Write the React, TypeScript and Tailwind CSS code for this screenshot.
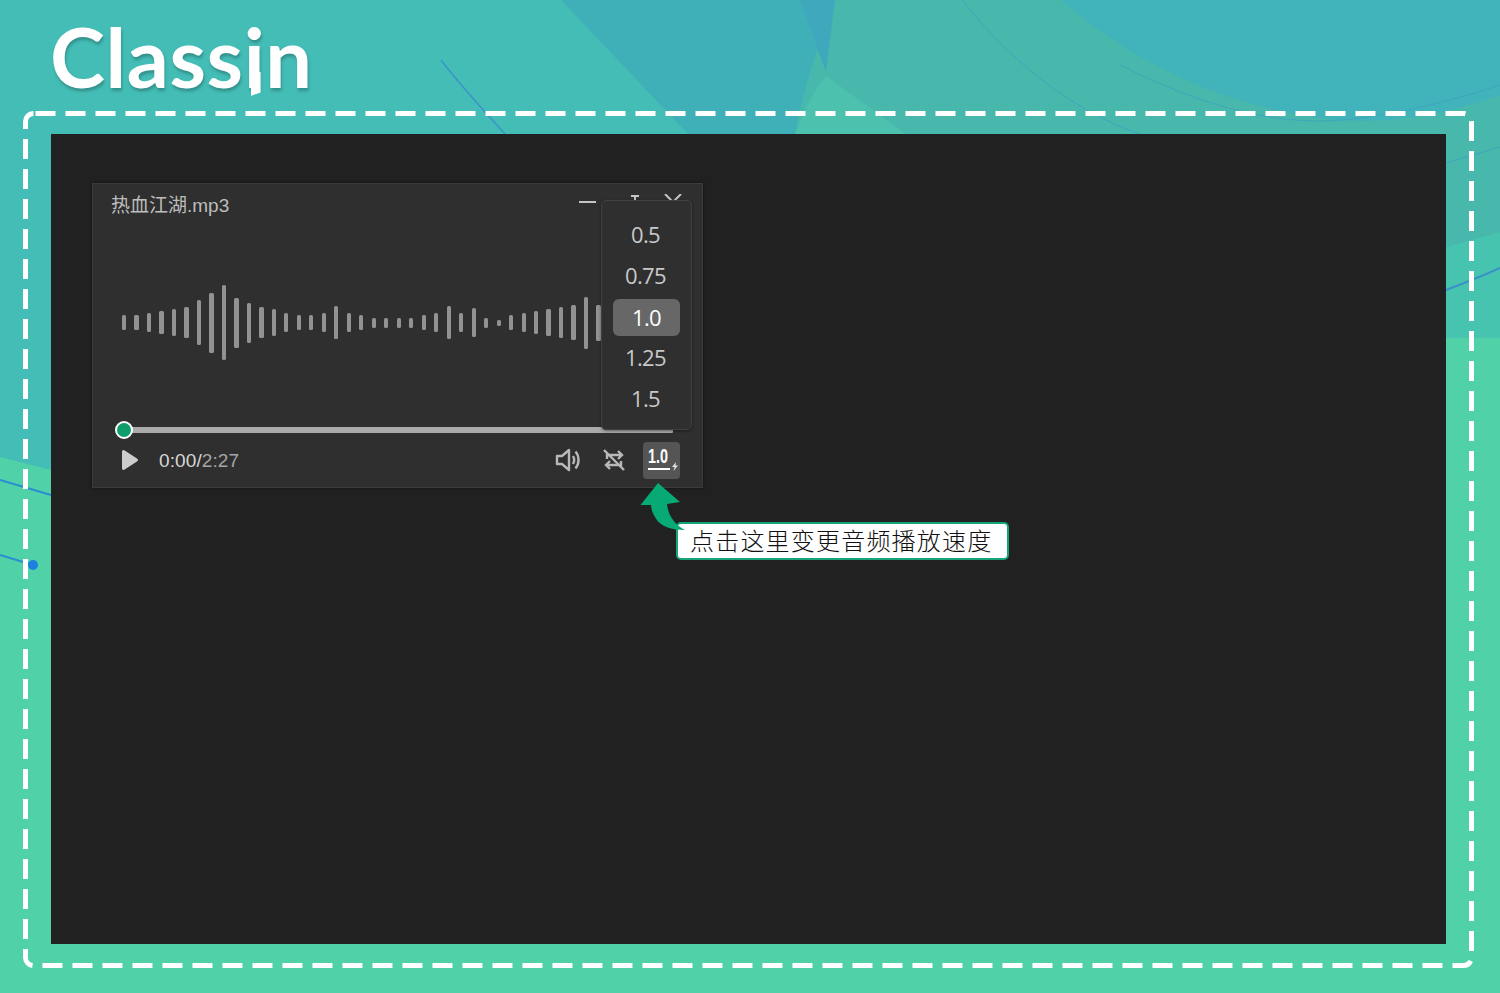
const BARS = [15, 15, 19, 23, 27, 31, 45, 60, 75, 50, 40, 31, 27, 19, 15, 15, 19, 33, 19, 15, 10, 10, 10, 10, 15, 19, 33, 19, 29, 10, 6, 15, 19, 23, 27, 31, 35, 52, 36];
const SPEEDS = ["0.5", "0.75", "1.0", "1.25", "1.5"];

function Backdrop() {
  return (
    <svg className="absolute inset-0" width="1500" height="993" viewBox="0 0 1500 993" fill="none">
      <rect width="1500" height="993" fill="#50d1a8" />
      <path d="M0 0H1500V338H1446V600H51V470L0 457Z" fill="#44bdb6" />
      <path d="M1446 247L1500 232V338H1446Z" fill="#47c4b0" />
      <path d="M835 0H1500V232L1446 247V134H795C803 90 818 45 835 0Z" fill="#48b8ac" />
      <path d="M561 0H835C818 45 803 90 795 134H688Z" fill="#3fb0b8" />
      <path d="M800 0H835L826 72Z" fill="#3fa8bc" />
      <path d="M826 76L906 134H795C803 110 815 90 826 76Z" fill="#4bc1ae" />
      <path d="M1061 0H1500V95C1430 120 1370 125 1320 118C1220 105 1130 60 1061 0Z" fill="#41b3ba" />
      <path d="M441 60C460 85 485 112 505 134" stroke="#3a95c8" strokeWidth="1.5" />
      <path d="M962 0C1010 60 1070 110 1140 134" stroke="#3fa6bd" strokeWidth="1" />
      <path d="M1120 65C1200 105 1280 130 1360 118C1420 110 1470 95 1500 85" stroke="#3fa6bd" strokeWidth="1" />
      <path d="M1446 163L1500 147" stroke="#3fa6bd" strokeWidth="1" />
      <path d="M1446 290C1465 283 1485 275 1500 268" stroke="#3a8fc8" strokeWidth="2" />
      <path d="M0 480L51 495" stroke="#2a8fd0" strokeWidth="2" />
      <path d="M0 555L33 565" stroke="#2a8fd0" strokeWidth="2" />
      <circle cx="33" cy="565" r="5" fill="#1f7fe0" />
      <rect x="25.5" y="113.5" width="1446" height="852" rx="8" stroke="#ffffff" strokeWidth="5" strokeDasharray="20 10" strokeDashoffset="-2" />
    </svg>
  );
}

function WindowButtons() {
  return (
    <svg width="103" height="16" viewBox="0 0 103 16" fill="none" stroke="#c4c4c4" strokeWidth="2">
      <path d="M0 8H17" />
      <path d="M52 2H60M56 2V8" />
      <path d="M86 0L94 8L102 0" />
    </svg>
  );
}

function VolumeIcon() {
  return (
    <svg width="25" height="24" viewBox="0 0 25 24" fill="none" stroke="#b8b8b8" strokeWidth="2.4" strokeLinejoin="round">
      <path d="M2 8H7L14 2V22L7 16H2Z" />
      <path d="M18 8C19.5 10.5 19.5 13.5 18 16" />
      <path d="M20.5 3.5C24.5 8 24.5 16 20.5 20.5" />
    </svg>
  );
}

function RepeatOffIcon() {
  return (
    <svg width="24" height="24" viewBox="0 0 24 24" fill="none" stroke="#b8b8b8" strokeWidth="2.4">
      <path d="M5 11V7H20M16 3L20 7L16 11" />
      <path d="M19 13V17H4M8 21L4 17L8 13" />
      <path d="M2 2L22 22" />
    </svg>
  );
}

function CalloutArrow() {
  return (
    <svg className="absolute left-[589px] top-[349px]" width="50" height="50" viewBox="640 483 50 50">
      <path d="M658 483L680 502L667 504C668 515 674 524 685 530C672 530 660 527 655 517C652 512 651 508 651 505L640.5 505Z" fill="#07a974" />
    </svg>
  );
}

export default function App() {
  return (
    <div className="relative h-[993px] w-[1500px] overflow-hidden" style={{ fontFamily: '"Open Sans", "Noto Sans CJK SC", sans-serif' }}>
      <Backdrop />

      <div className="relative flex h-[134px] items-start pl-[50px] pt-[6px]">
        <span className="font-['Lato'] text-[83px] font-bold leading-[100px] tracking-[0.6px] text-white [text-shadow:1px_3px_3px_rgba(40,110,105,0.55)]">
          Class
          <span className="relative">
            i
            <span className="absolute left-[7px] top-[66px] h-[24px] w-[10px] bg-white [clip-path:polygon(0_0,100%_0,100%_85%,0_100%)]" />
          </span>
          n
        </span>
      </div>

      <main className="relative ml-[51px] h-[810px] w-[1395px] bg-[#212121] pl-[41px] pt-[49px]">
        <section className="relative flex h-[305px] w-[611px] flex-col border border-[#3b3b3b] bg-[#2f2f2f] shadow-[0_0_3px_rgba(0,0,0,0.5)]">
          <header className="flex h-[40px] items-start justify-between pl-[18px] pr-[20px] pt-[10px]">
            <span className="font-['Liberation_Sans','Noto_Sans_CJK_SC',sans-serif] text-[19px] leading-[24px] text-[#bdbdbd]">热血江湖.mp3</span>
            <WindowButtons />
          </header>

          <div className="flex h-[203px] items-center gap-[8.3px] pb-[6px] pl-[29px]">
            {BARS.map((h, i) => (
              <div key={i} className="w-[4.2px] rounded-[1.5px] bg-[#929292]" style={{ height: h }} />
            ))}
          </div>

          <div className="relative ml-[31px] mr-[29px] h-[6px] rounded-[1px] bg-[#ababab]">
            <div className="absolute left-[-9px] top-[-6px] h-[18px] w-[18px] rounded-full border-2 border-white bg-[#0f9d6c]" />
          </div>

          <div className="flex flex-1 items-center pl-[28px] pr-[22px]">
            <svg width="18" height="22" viewBox="0 0 18 22">
              <path d="M2.5 2.5L15.5 11L2.5 19.5Z" fill="#cccccc" stroke="#cccccc" strokeWidth="3" strokeLinejoin="round" />
            </svg>
            <span className="ml-[20px] pt-[1px] font-['Liberation_Sans'] text-[19px] leading-[24px] tracking-[0.1px] text-[#d6d6d6]">
              0:00/<span className="text-[#a6a6a6]">2:27</span>
            </span>
            <div className="ml-auto flex items-center">
              <VolumeIcon />
              <div className="ml-[22px]"><RepeatOffIcon /></div>
              <button className="relative ml-[17px] flex h-[37px] w-[37px] flex-col items-start rounded-[4px] bg-[#555555] pl-[5px] pt-[3px]">
                <span className="origin-left font-['Liberation_Sans'] text-[20px] font-bold leading-[23px] text-white [transform:scaleX(0.72)]">1.0</span>
                <span className="h-[2px] w-[22px] bg-white" />
                <svg className="absolute bottom-[8px] right-[2px]" width="6" height="9" viewBox="0 0 6 9">
                  <path d="M4 0L0 5H2.5L1.5 9L6 3.5H3.5Z" fill="#e0e0e0" />
                </svg>
              </button>
            </div>
          </div>

          <div className="absolute left-[508px] top-[16px] flex h-[230px] w-[91px] flex-col items-center rounded-[5px] border border-[#414141] bg-[#2f2f2f] pt-[13px] shadow-[0_1px_3px_rgba(0,0,0,0.45)]">
            {SPEEDS.map((s) => (
              <div
                key={s}
                className={`flex items-center justify-center text-[22px] tracking-[-0.6px] ${
                  s === "1.0"
                    ? "mb-[1px] mt-[3px] h-[37px] w-[67px] rounded-[6px] bg-[#676767] text-white"
                    : "h-[41px] w-full pr-[2px] text-[#c8c8c8]"
                }`}
              >
                {s}
              </div>
            ))}
          </div>
        </section>

        <div className="absolute left-[625px] top-[388px] flex h-[38px] w-[333px] items-center rounded-[5px] border-2 border-[#16a57a] bg-white pb-[2px] pl-[12px] font-['Noto_Sans_CJK_SC',sans-serif] text-[24px] font-light tracking-[1.2px] text-[#111111]">
          点击这里变更音频播放速度
        </div>

        <CalloutArrow />
      </main>
    </div>
  );
}
